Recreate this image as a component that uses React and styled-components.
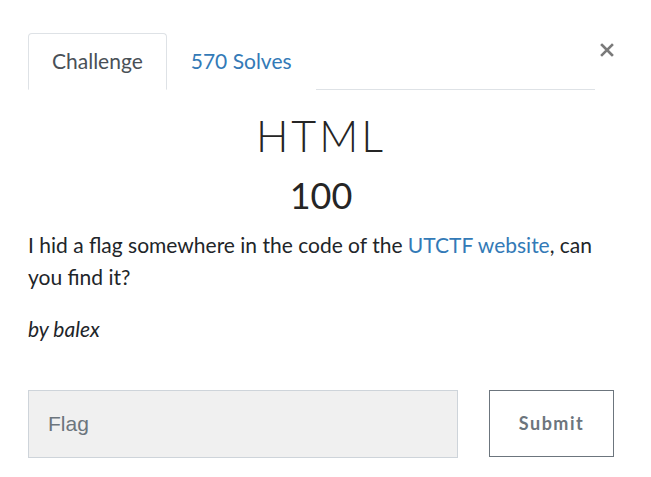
import React from 'react'
import styled, { createGlobalStyle } from 'styled-components'

const Global = createGlobalStyle`
    html, body {
        margin: 0;
        padding: 0;
        background: #fff;
    }
    body {
        font-family: Lato, "Open Sans", sans-serif;
        color: #212529;
    }
`

export default function App() {
    return (
        <>
            <Global />
            <Modal>
                <Header>
                    <Tabs>
                        <Tab active>Challenge</Tab>
                        <Tab>570 Solves</Tab>
                    </Tabs>
                    <Close aria-label="Close">
                        <svg width="14" height="14" viewBox="0 0 14 14">
                            <path d="M2 2 L12 12 M12 2 L2 12" stroke="#7a7a7a" strokeWidth="2.6" strokeLinecap="square" />
                        </svg>
                    </Close>
                </Header>

                <Title>HTML</Title>
                <Value>100</Value>

                <Description>
                    <p>
                        I hid a flag somewhere in the code of the <a href="#">UTCTF website</a>, can you find it?
                    </p>
                    <p><em>by balex</em></p>
                </Description>

                <SubmitRow>
                    <FlagInput placeholder="Flag" />
                    <SubmitButton>Submit</SubmitButton>
                </SubmitRow>
            </Modal>
        </>
    )
}

const Modal = styled.div`
    width: 586px;
    padding: 33px 37px 0 28px;
`

const Header = styled.div`
    display: flex;
    align-items: flex-start;
`

const Tabs = styled.nav`
    flex: 1;
    display: flex;
    border-bottom: 1px solid #dee2e6;
`

const Tab = styled.div`
    font-size: 21px;
    line-height: 24px;
    padding: 15px 23px 16px;
    margin-bottom: -1px;
    border: 1px solid ${p => p.active ? '#dee2e6' : 'transparent'};
    border-bottom-color: ${p => p.active ? '#fff' : 'transparent'};
    border-radius: 4px 4px 0 0;
    color: ${p => p.active ? '#495057' : '#337ab7'};
    background: #fff;
    cursor: pointer;
`

const Close = styled.button`
    width: 19px;
    padding: 0;
    margin-top: 10px;
    border: 0;
    background: none;
    display: flex;
    justify-content: flex-end;
    cursor: pointer;
`

const Title = styled.h1`
    margin: 20px 0 0;
    text-align: center;
    font-size: 43px;
    font-weight: 300;
    line-height: 1.2;
    letter-spacing: 3px;
    color: #252525;
`

const Value = styled.h2`
    margin: 12px 0 0;
    text-align: center;
    font-size: 36px;
    font-weight: 400;
    line-height: 1.2;
    color: #252525;
`

const Description = styled.div`
    margin-top: 12px;
    font-size: 21px;
    line-height: 32px;

    p {
        margin: 0 0 20px;
    }

    a {
        color: #337ab7;
        text-decoration: none;
    }
`

const SubmitRow = styled.div`
    display: flex;
    align-items: flex-start;
    gap: 31px;
    margin-top: 45px;
`

const FlagInput = styled.input`
    box-sizing: border-box;
    width: 430px;
    height: 68px;
    padding: 0 19px;
    border: 1px solid #ced4da;
    border-radius: 0;
    background: #f0f0f0;
    font-family: "Liberation Sans", Arial, sans-serif;
    font-size: 21px;
    color: #495057;
    outline: none;

    &::placeholder {
        color: #6c757d;
    }
`

const SubmitButton = styled.button`
    box-sizing: border-box;
    width: 125px;
    height: 67px;
    border: 1px solid #6c757d;
    border-radius: 0;
    background: #fff;
    font-family: Lato, sans-serif;
    font-weight: 700;
    font-size: 18px;
    letter-spacing: 1.5px;
    color: #6c757d;
    cursor: pointer;
`
